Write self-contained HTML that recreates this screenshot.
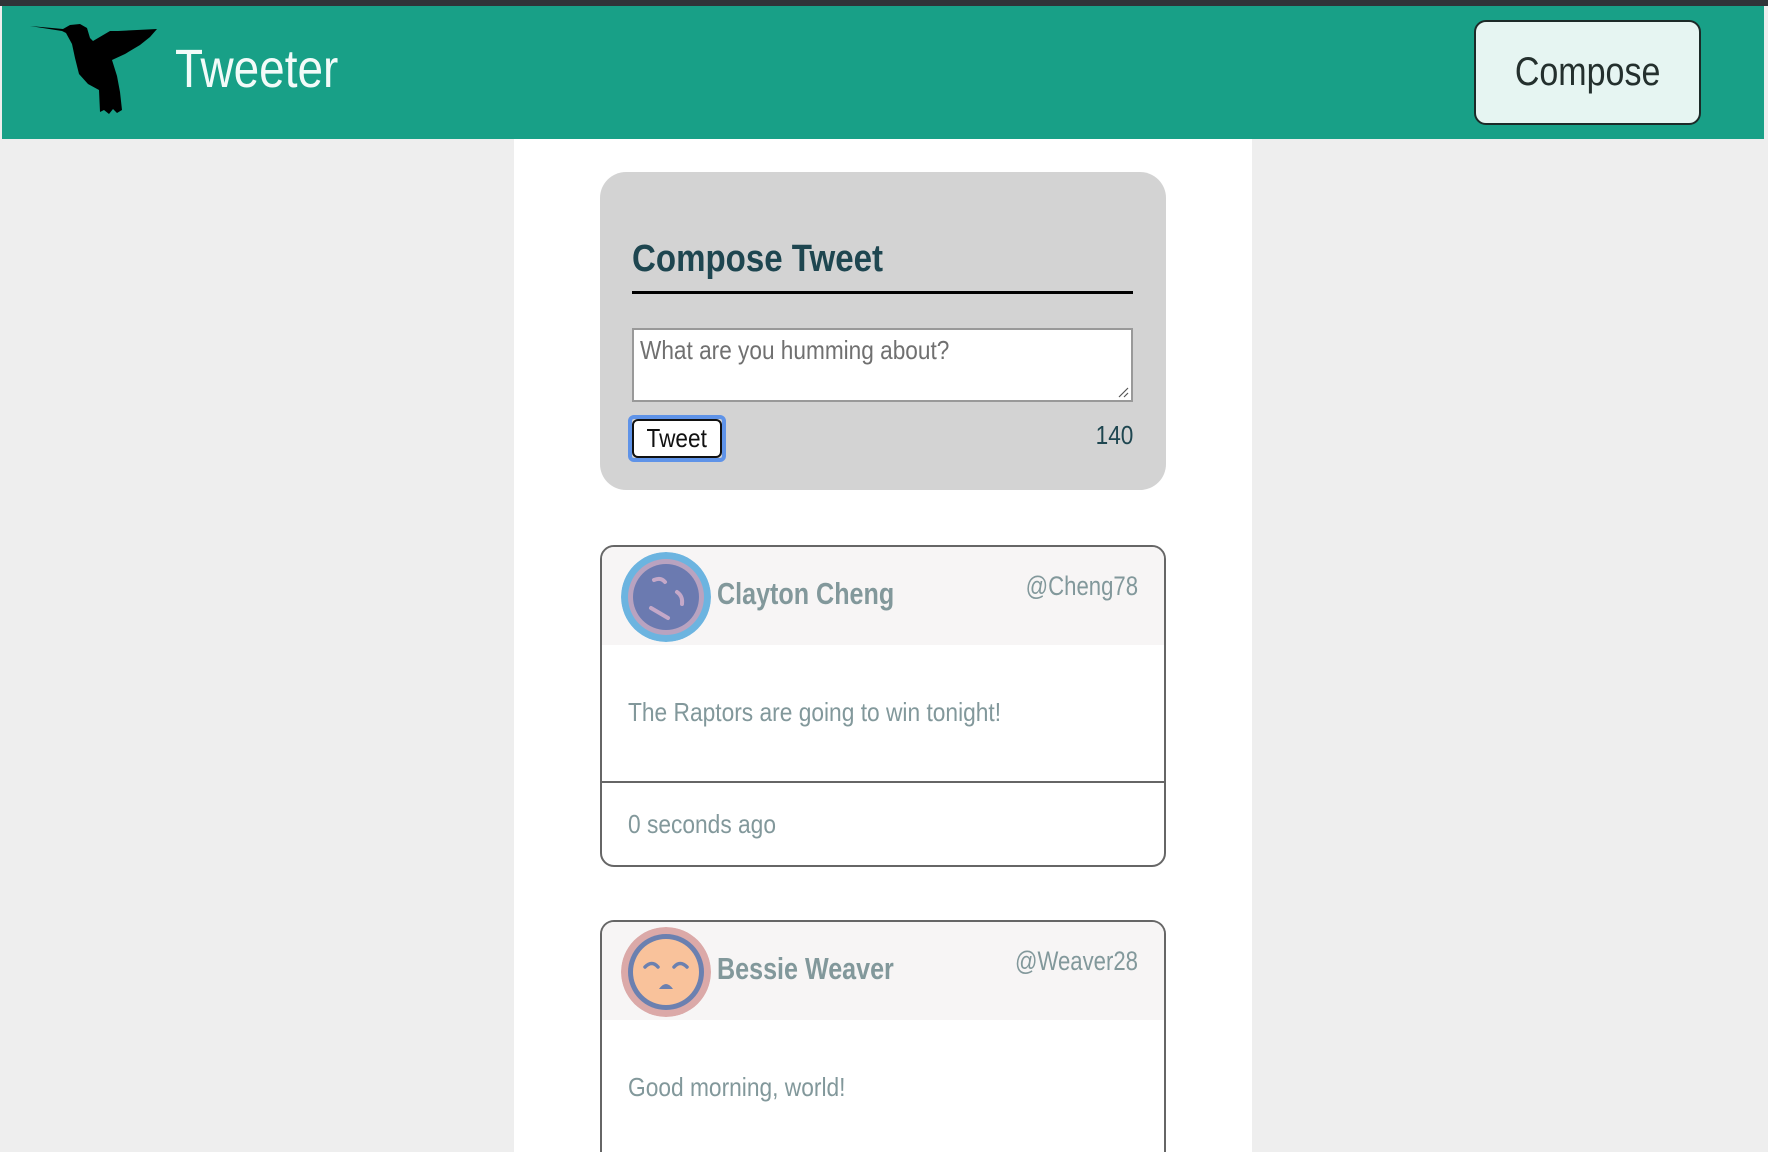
<!DOCTYPE html>
<html style="overflow:hidden;width:1768px;height:1152px"><head><meta charset="utf-8"><style>
*{box-sizing:border-box;margin:0;padding:0}
body{width:1768px;height:1152px;overflow:hidden;background:#eeeeee;font-family:"Liberation Sans Narrow","Liberation Sans",sans-serif;position:relative}
.n{display:inline-block;transform-origin:left center;white-space:nowrap}
.top{position:absolute;left:0;top:0;width:1768px;height:6px;background:#303438}
.hdr{position:absolute;left:2px;top:6px;width:1762px;height:133px;background:#18a087}
.logo{position:absolute;left:175px;top:38px;font-size:54px;color:#f2fbf9;transform:scaleX(.85)}
.cbtn{position:absolute;left:1474px;top:20px;width:227px;height:105px;background:#e6f5f2;border:2px solid #1c2a28;border-radius:12px;font-size:40px;color:#24302e;text-align:center;line-height:101px}
.cbtn span{display:inline-block;transform:scaleX(.85)}
.main{position:absolute;left:514px;top:139px;width:738px;height:1013px;background:#fff}
.comp{position:absolute;left:600px;top:172px;width:566px;height:318px;background:#d3d3d3;border-radius:26px}
.ct{position:absolute;left:632px;top:238px;font-size:38px;font-weight:bold;color:#1e4650;transform:scaleX(.87)}
.ul{position:absolute;left:632px;top:291px;width:501px;height:3px;background:#000}
.ta{position:absolute;left:632px;top:328px;width:501px;height:74px;background:#fff;border:2px solid #999;font-size:26px;color:#707070;padding:5px 6px}
.tb{position:absolute;left:628px;top:415px;width:98px;height:47px;border:4px solid #5f93e8;border-radius:6px}
.tb div{width:100%;height:100%;background:#fff;border:2px solid #111;border-radius:6px;font-size:26px;color:#111;text-align:center;line-height:35px}
.cnt{position:absolute;left:1090px;top:420px;width:43px;text-align:right;font-size:26px;color:#1e4650}
.card{position:absolute;left:600px;width:566px;border:2px solid #666;border-radius:14px;background:#fff;overflow:hidden}
.ch{height:98px;background:#f7f5f5;position:relative}
.av{position:absolute;left:19px;top:5px;width:90px;height:90px;border-radius:50%}
.nm{position:absolute;left:115px;top:29px;font-size:31px;font-weight:bold;color:#82989b;transform:scaleX(.81)}
.hd{position:absolute;right:26px;top:24px;font-size:27px;color:#82989b;transform:scaleX(.82);transform-origin:right center}
.body{height:136px;font-size:26px;color:#82989b;padding:52px 0 0 26px}
.ft{border-top:2px solid #666;height:84px;font-size:26px;color:#82989b;padding:26px 0 0 26px}
.logo,.ct,.nm{transform-origin:left center;white-space:nowrap}
</style></head><body>
<div class="top"></div>
<div class="hdr"></div>
<svg style="position:absolute;left:0;top:0" width="170" height="130" viewBox="0 0 170 130"><path d="M30 26 L63 29 L70 25 L80 24 L87 28 L90 38 L93 41 L110 31 L118 31 L157 29 L150 37 L140 45 L125 54 L112 60 L117 76 L120 92 L122 110 L117 113 L113 109 L109 114 L104 110 L100 112 L99 90 L88 84 L79 74 L75 58 L72 44 L66 33 L62 31 Z" fill="#000"/></svg>
<div class="logo">Tweeter</div>
<div class="cbtn"><span>Compose</span></div>
<div class="main"></div>
<div class="comp"></div>
<div class="ct">Compose Tweet</div>
<div class="ul"></div>
<div class="ta"><span class="n" style="transform:scaleX(.87)">What are you humming about?</span><svg style="position:absolute;right:2px;bottom:2px" width="12" height="12"><path d="M11 2 L2 11 M11 7 L7 11" stroke="#555" stroke-width="1.2"/></svg></div>
<div class="tb"><div><span class="n" style="transform:scaleX(.87);transform-origin:center">Tweet</span></div></div>
<div class="cnt"><span class="n" style="transform:scaleX(.87);transform-origin:right center">140</span></div>

<div class="card" style="top:545px;height:322px">
<div class="ch">
<svg class="av" viewBox="0 0 90 90"><circle cx="45" cy="45" r="45" fill="#6cb4e0"/><circle cx="45" cy="45" r="38" fill="#b9a3c0"/><circle cx="45" cy="45" r="33" fill="#6b7ab0"/><path d="M33 28 Q40 25 44 30 M56 40 Q62 44 61 52 M30 56 L47 66" stroke="#c4a8c8" stroke-width="4" fill="none" stroke-linecap="round"/></svg>
<div class="nm">Clayton Cheng</div><div class="hd">@Cheng78</div></div>
<div class="body"><span class="n" style="transform:scaleX(.875)">The Raptors are going to win tonight!</span></div>
<div class="ft"><span class="n" style="transform:scaleX(.875)">0 seconds ago</span></div>
</div>

<div class="card" style="top:920px;height:232px;border-bottom:none;border-radius:14px 14px 0 0">
<div class="ch">
<svg class="av" viewBox="0 0 90 90"><circle cx="45" cy="45" r="45" fill="#dba9a8"/><circle cx="45" cy="45" r="38" fill="#6b80b0"/><circle cx="45" cy="45" r="33" fill="#f9c29b"/><path d="M24 40 Q31 33 37 40 M53 40 Q59 33 66 40" stroke="#6b80b0" stroke-width="3.5" fill="none" stroke-linecap="round"/><path d="M38 62 Q45 52 52 62 Z" fill="#6b80b0"/></svg>
<div class="nm">Bessie Weaver</div><div class="hd">@Weaver28</div></div>
<div class="body"><span class="n" style="transform:scaleX(.875)">Good morning, world!</span></div>
</div>
</body></html>
